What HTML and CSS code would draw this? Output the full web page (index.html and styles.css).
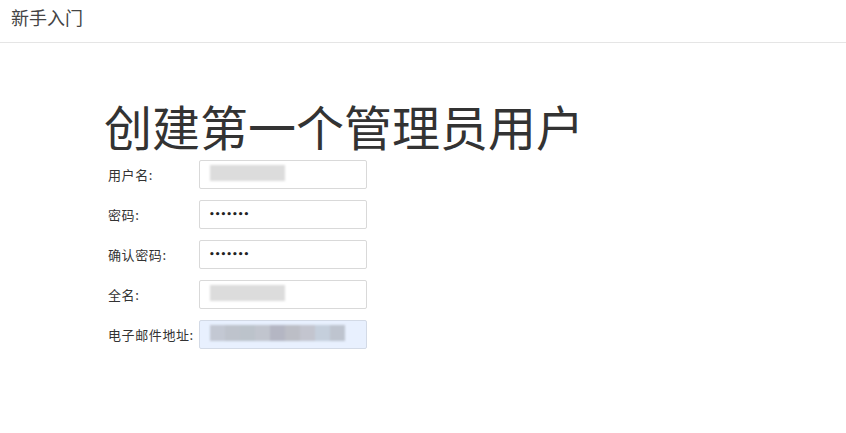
FILE: index.html
```html
<!DOCTYPE html>
<html lang="zh">
<head>
<meta charset="utf-8">
<title>新手入门</title>
<link rel="stylesheet" href="styles.css">
</head>
<body>
<header class="topbar">新手入门</header>
<main class="content">
  <h1 class="title">创建第一个管理员用户</h1>
  <form class="form">
    <div class="row">
      <label class="label">用户名:</label>
      <div class="field">
        <div class="input"></div>
        <div class="blur blur-user"></div>
      </div>
    </div>
    <div class="row">
      <label class="label">密码:</label>
      <div class="field"><div class="input dots">•••••••</div></div>
    </div>
    <div class="row">
      <label class="label">确认密码:</label>
      <div class="field"><div class="input dots">•••••••</div></div>
    </div>
    <div class="row">
      <label class="label">全名:</label>
      <div class="field">
        <div class="input"></div>
        <div class="blur blur-user"></div>
      </div>
    </div>
    <div class="row">
      <label class="label">电子邮件地址:</label>
      <div class="field">
        <div class="input autofill"></div>
        <div class="blur blur-mail">
          <span class="seg s1"></span><span class="seg s2"></span><span class="seg s3"></span><span class="seg s4"></span><span class="seg s5"></span><span class="seg s6"></span><span class="seg s7"></span><span class="seg s8"></span><span class="seg s9"></span>
        </div>
      </div>
    </div>
  </form>
</main>
</body>
</html>
```
FILE: styles.css
```css
html, body {
  margin: 0;
  padding: 0;
  background: #fff;
  font-family: "Noto Sans CJK SC", "Noto Sans", sans-serif;
  color: #333;
}
.topbar {
  height: 42px;
  border-bottom: 1px solid #e5e5e5;
  box-sizing: content-box;
  padding-left: 11px;
  font-size: 18px;
  line-height: 34px;
  color: #444;
}
.content {
  padding-left: 104px;
}
.title {
  margin: 52px 0 0 0;
  font-size: 48px;
  font-weight: normal;
  line-height: 60px;
  height: 65px;
  color: #333;
}
.form {
  display: flex;
  flex-direction: column;
  gap: 11px;
}
.row {
  display: flex;
  align-items: center;
  height: 29px;
}
.label {
  width: 91px;
  padding-left: 4px;
  font-size: 13px;
  letter-spacing: 0.6px;
  color: #333;
}
.field {
  position: relative;
  width: 168px;
  height: 29px;
}
.input {
  box-sizing: border-box;
  width: 168px;
  height: 29px;
  border: 1px solid #d9d9d9;
  border-radius: 2px;
  background: #fff;
  padding-left: 9px;
  font-size: 12px;
  line-height: 26px;
}
.dots {
  color: #222;
  font-family: "DejaVu Sans", sans-serif;
  font-size: 9px;
  letter-spacing: 0;
  font-weight: bold;
}
.autofill {
  background: #e8f0fe;
  border-color: #d3dae6;
}
.blur {
  position: absolute;
  top: 5px;
  left: 11px;
  height: 16px;
}
.blur-user {
  width: 75px;
  background: #dcdcdc;
  filter: blur(1px);
}
.blur-mail {
  display: flex;
  width: 135px;
  filter: blur(1px);
}
.seg { flex: 1; height: 16px; }
.s1 { background: #c3c8d3; }
.s2 { background: #bec3cc; }
.s3 { background: #bcc3cb; }
.s4 { background: #c1c5ce; }
.s5 { background: #b4b6c3; }
.s6 { background: #bcbec6; }
.s7 { background: #c3c5cf; }
.s8 { background: #c5cfdc; }
.s9 { background: #bec4cf; }
```
